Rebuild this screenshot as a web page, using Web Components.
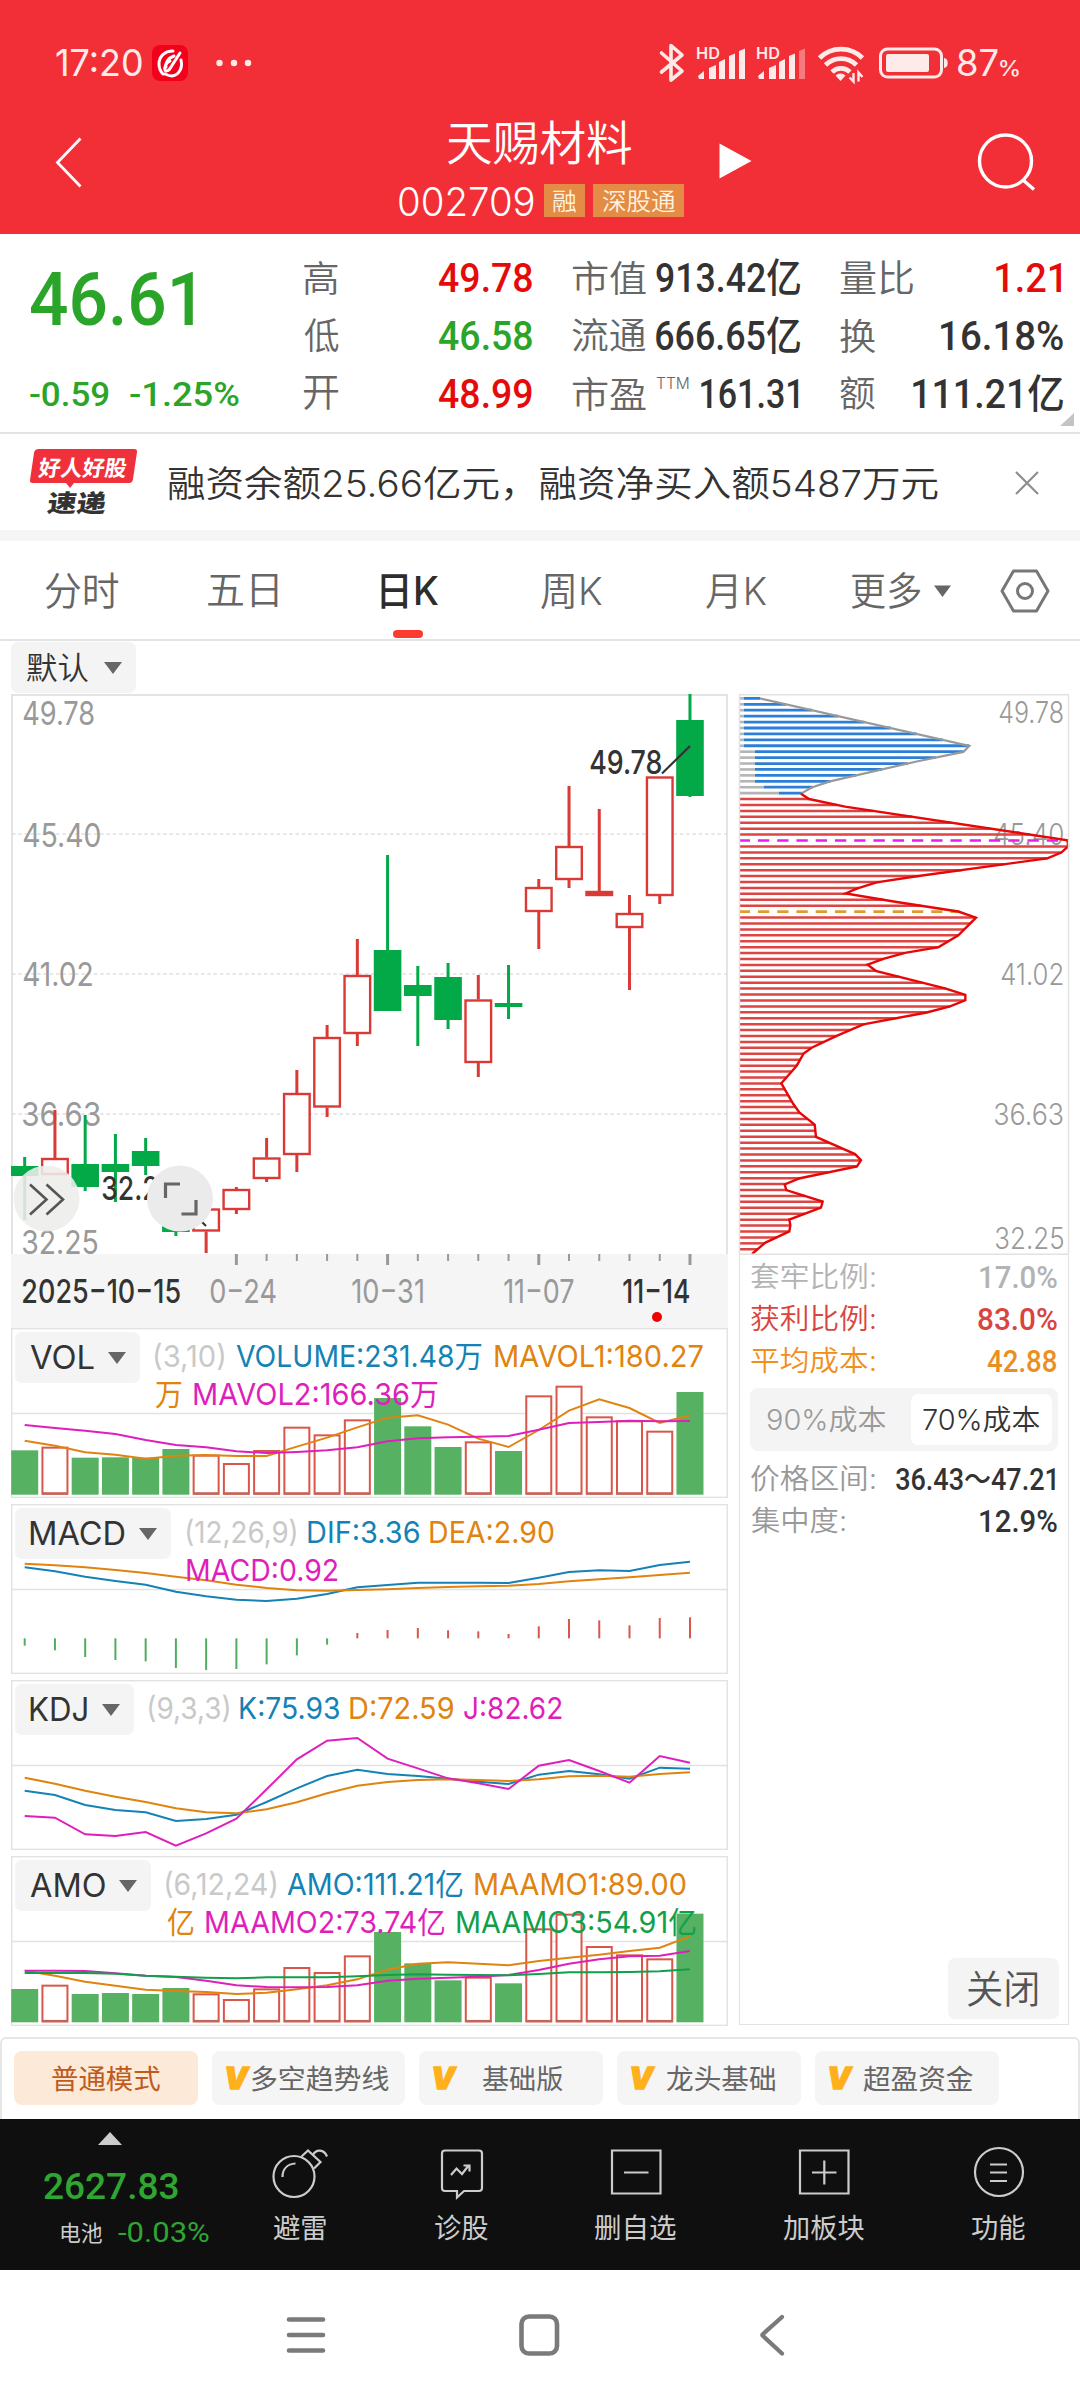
<!DOCTYPE html>
<html lang="zh-CN">
<head>
<meta charset="utf-8">
<title>天赐材料 002709</title>
<style>
  html, body { margin: 0; padding: 0; background: #fff; }
  body { width: 1080px; font-family: Inter, "Noto Sans CJK SC", sans-serif; }
</style>
</head>
<body>
<stock-page></stock-page>
<script>
const MISANS = 'Inter, "Noto Sans CJK SC", sans-serif';
const BASE = `
  :host { display: block; box-sizing: border-box; font-family: ${MISANS}; }
  * { box-sizing: border-box; }
  .row { display: flex; }
  .num { font-family: Roboto, "Noto Sans CJK SC", sans-serif; font-weight: 500; }
  svg { display: block; flex: none; overflow: visible; }
`;

function define(name, css, html) {
  customElements.define(name, class extends HTMLElement {
    constructor() {
      super();
      const root = this.attachShadow({ mode: 'open' });
      const t = document.createElement('template');
      t.innerHTML = `<style>${BASE}${css}</style>` + (typeof html === 'string' ? html : '');
      root.appendChild(t.content.cloneNode(true));
    }
    connectedCallback() {
      if (typeof html === 'function' && !this.ready) {
        this.ready = true;
        this.shadowRoot.innerHTML = `<style>${BASE}${css}</style>` + html(this);
      }
    }
  });
}

/* A text run whose visible ink fills a box of w x h. With s, the font size is
   fixed and the baseline sits on the bottom edge of the box. */
const pen = document.createElement('canvas').getContext('2d');
customElements.define('ink-text', class extends HTMLElement {
  constructor() {
    super();
    this.attachShadow({ mode: 'open' }).innerHTML = `<style>
      :host { display: block; flex: none; white-space: nowrap; }
      #t { display: block; width: max-content; line-height: 1; transform-origin: 0 0; }
      i { display: inline-block; width: 0; height: 0; }
    </style><span id="t"><slot></slot><i></i></span>`;
  }
  connectedCallback() {
    const w = +this.getAttribute('w'), h = +this.getAttribute('h');
    let s = +this.getAttribute('s') || 0;
    const fixed = !!s, text = this.textContent;
    const cs = getComputedStyle(this);
    const measure = px => {
      pen.font = `${cs.fontStyle} ${cs.fontWeight} ${px}px ${cs.fontFamily}`;
      return pen.measureText(text);
    };
    if (!s) {
      const m = measure(100);
      s = h / (m.actualBoundingBoxAscent + m.actualBoundingBoxDescent) * 100;
    }
    const m = measure(s);
    this.style.width = w + 'px';
    this.style.height = h + 'px';
    const t = this.shadowRoot.getElementById('t');
    t.style.fontSize = s + 'px';
    const base = t.querySelector('i').getBoundingClientRect().bottom - t.getBoundingClientRect().top;
    const kx = w / (m.actualBoundingBoxLeft + m.actualBoundingBoxRight);
    const dy = fixed ? h - base : m.actualBoundingBoxAscent - base;
    t.style.transform = `translate(${m.actualBoundingBoxLeft * kx}px, ${dy}px) scaleX(${kx})`;
  }
});

define('status-bar', `
  :host { height: 100px; color: #ffeaea; padding: 43px 0 0 56px; }
  .row { height: 40px; }
`, `
  <div class="row">
    <ink-text w="86" h="28" style="margin-top:6px">17:20</ink-text>
    <svg width="110" height="40" viewBox="142 43 110 40">
      <rect x="152" y="45" width="36" height="36" rx="8" fill="#f4001c"/>
      <path d="M173 51c-9 0-14 6-14 13 0 5 2 8 4 10M180 53l-9 14c-2 4-5 5-6 3-1-3 1-7 5-9M181 60c2 8-2 15-9 16-3 0-5-1-7-2M174 56c-6 2-9 7-8 11" fill="none" stroke="#fff" stroke-width="3" stroke-linecap="round"/>
      <g fill="#ffeaea"><circle cx="219.500" cy="63" r="3.200"/><circle cx="234" cy="63" r="3.200"/><circle cx="248" cy="63" r="3.200"/></g>
    </svg>
    <svg width="34" height="40" viewBox="656 43 34 40" style="margin-left:404px">
      <path d="M661.500 53l20.500 18-11 9V45.500l11 9.500-20.500 17" fill="none" stroke="#ffeaea" stroke-width="3.600" stroke-linejoin="round" stroke-linecap="round"/>
    </svg>
    <signal-bars></signal-bars>
    <signal-bars weak style="margin-left:8px"></signal-bars>
    <svg width="54" height="40" viewBox="814 43 54 40" style="margin-left:5px">
      <g fill="none" stroke="#ffeaea" stroke-width="4.800">
        <path d="M820.500 58a30.500 30.500 0 0 1 43 0"/><path d="M826.500 65a22 22 0 0 1 31 0"/><path d="M833 72a13 13 0 0 1 18 0"/>
      </g>
      <path d="M836.500 75.500a7.500 7.500 0 0 1 10 0l-5 5.500z" fill="#ffeaea"/>
      <path d="M854.500 73v8.500l-4-4M859.500 81.500v-9l4 4.500" fill="none" stroke="#ffeaea" stroke-width="2.400"/>
    </svg>
    <svg width="72" height="40" viewBox="880 43 72 40" style="margin-left:12px">
      <rect x="881.500" y="49" width="61" height="28" rx="7" fill="none" stroke="#ffeaea" stroke-width="3"/>
      <rect x="887" y="54" width="43" height="18" rx="2" fill="#ffeaea"/>
      <path d="M945 58c5 0 5 10 0 10z" fill="#ffeaea"/>
    </svg>
    <ink-text w="40" h="28" style="margin:6px 0 0 7px">87</ink-text>
    <ink-text w="19" h="16" style="margin:17px 0 0 2px;font-weight:500">%</ink-text>
  </div>
`);

define('signal-bars', `
  :host { width: 52px; height: 40px; margin-left: 6px; display: flex; }
  ink-text { margin: 4px -24px 0 1px; font-weight: 600; }
`, el => `
  <ink-text w="23" h="12">HD</ink-text>
  <svg width="52" height="40" viewBox="-1 43 52 40" fill="#ffeaea">
    <path d="M1 76l6-5v8H2z"/><path d="M12 68l7-3v14h-7z"/><path d="M22 62l6-3v20h-6z"/><path d="M32 56l6-2.500V79h-6z"/>
    <path d="M42 51l6-2.500V79h-6z" opacity="${el.hasAttribute('weak') ? .4 : 1}"/>
  </svg>
`);

define('title-bar', `
  :host { height: 134px; display: flex; color: #fff; }
  .mid { width: 285px; margin-left: 317px; }
  ink-text { font-weight: 350; }
  .code { margin-top: 20px; align-items: center; height: 33px; }
  .tag { background: #e48b45; color: #fff3df; height: 33px; padding: 5px 5px 0; }
`, `
  <svg width="26" height="134" viewBox="56 100 26 134" style="margin-left:56px"><path d="M80.500 138.500L57.500 162.500l23 24" fill="none" stroke="#fff" stroke-width="2.800"/></svg>
  <div class="mid">
    <ink-text w="184" h="44" style="margin:20px 0 0 49px">天赐材料</ink-text>
    <div class="row code">
      <ink-text w="135" h="30">002709</ink-text>
      <div class="tag" style="width:41px;margin-left:10px;padding-left:9px"><ink-text w="23" h="22">融</ink-text></div>
      <div class="tag" style="width:91px;margin-left:8px;padding-left:9px"><ink-text w="73" h="22">深股通</ink-text></div>
    </div>
  </div>
  <svg width="33" height="134" viewBox="719 100 33 134" style="margin-left:35px"><path d="M719.500 143.500v35L751.500 161z" fill="#fff"/></svg>
  <svg width="64" height="134" viewBox="975 100 64 134" style="margin-left:223px"><g fill="none" stroke="#fff" stroke-width="3.400"><circle cx="1005.500" cy="161" r="26"/><path d="M1023 180l11 9.500"/></g></svg>
`);

define('quote-cell', `
  :host { display: flex; justify-content: space-between; align-items: flex-end; height: 35px; }
  .l { color: #666; font-weight: 350; }
`, el => {
  const a = n => el.getAttribute(n);
  return `<ink-text class="l" w="${a('lw')}" h="34">${a('label')}</ink-text>
  ${a('sup') ? `<ink-text class="l" w="33" h="12" style="margin:0 12px 21px 9px">${a('sup')}</ink-text>` : ''}
  <ink-text class="num" w="${a('vw')}" h="29" s="40" style="color:${a('c') || '#333'}; margin:0 ${a('pr') || 0}px 2px 0">${a('value')}</ink-text>`;
});

define('quote-board', `
  :host { height: 200px; border-bottom: 2px solid #e3e3e3; padding: 25px 17px 0 30px; display: flex; align-items: flex-start; }
  .col { display: flex; flex-direction: column; gap: 23px; width: 228px; }
  .price { width: 209px; margin-right: 65px; color: #2ba42a; padding-top: 13px; }
`, `
  <div class="price">
    <ink-text class="num" w="163" h="54">46.61</ink-text>
    <div class="row" style="margin-top:56px"><ink-text class="num" w="79" h="25">-0.59</ink-text>
    <ink-text class="num" w="109" h="25" style="margin-left:21px">-1.25%</ink-text></div>
  </div>
  <div class="col">
    <quote-cell label="高" lw="34" value="49.78" vw="93" c="#e60b0b"></quote-cell>
    <quote-cell label="低" lw="35" value="46.58" vw="93" c="#2ba42a"></quote-cell>
    <quote-cell label="开" lw="35" value="48.99" vw="93" c="#e60b0b"></quote-cell>
  </div>
  <div class="col" style="margin-left:40px">
    <quote-cell label="市值" lw="74" value="913.42亿" vw="144"></quote-cell>
    <quote-cell label="流通" lw="74" value="666.65亿" vw="144"></quote-cell>
    <quote-cell label="市盈" lw="74" sup="TTM" value="161.31" vw="97" pr="2"></quote-cell>
  </div>
  <div class="col" style="margin-left:40px;width:223px">
    <quote-cell label="量比" lw="73" value="1.21" vw="65" pr="2" c="#e60b0b"></quote-cell>
    <quote-cell label="换" lw="35" value="16.18%" vw="122"></quote-cell>
    <quote-cell label="额" lw="35" value="111.21亿" vw="150"></quote-cell>
  </div>
  <svg width="14" height="14" viewBox="0 0 14 14" style="margin:154px -11px 0 -3px"><path d="M14 0v13H0z" fill="#c4c4c4"/></svg>
`);

define('news-strip', `
  :host { height: 107px; display: flex; border-bottom: 11px solid #f5f5f5; }
  .logo { width: 107px; margin-left: 30px; padding-top: 15px; height: 96px; display: grid; align-content: start; }
  .logo > * { grid-column: 1; }
  .logo svg { grid-row: 1; }
  .a { grid-row: 1; margin: 8px 0 0 9px; color: #fff; font-weight: 700; transform: skewX(-8deg); }
  .b { margin: 1px 0 0 18px; color: #333; font-weight: 900; transform: skewX(-8deg); }
`, `
  <div class="logo">
    <svg width="107" height="40" viewBox="30 449 107 40"><path d="M39 449h95q3.500 0 3 3l-4 27q-.5 4-4 4h-55l-4 5-4-5H33q-3.500 0-3-3l4-27q.5-4 5-4z" fill="#f0303a"/></svg>
    <ink-text class="a" w="88" h="21">好人好股</ink-text>
    <ink-text class="b" w="58" h="24">速递</ink-text>
  </div>
  <ink-text w="771" h="35" style="margin:31px 0 0 31px;color:#333;font-weight:350">融资余额25.66亿元，融资净买入额5487万元</ink-text>
  <svg width="26" height="26" viewBox="0 0 26 26" style="margin:36px 0 0 75px"><path d="M2 2l22 22M24 2L2 24" stroke="#8d8d8d" stroke-width="2.200" fill="none"/></svg>
`);

define('period-tabs', `
  :host { height: 100px; display: flex; border-bottom: 2px solid #e3e3e3; color: #666; padding-top: 31px; font-weight: 350; }
  .on { color: #2d2d2d; font-weight: 500; }
  .bar { width: 30px; height: 8px; border-radius: 4px; background: #fb3b30; margin: 22px 0 0 12px; }
`, `
  <ink-text w="74" h="36" style="margin-left:45px">分时</ink-text>
  <ink-text w="70" h="33" style="margin:2px 0 0 89px">五日</ink-text>
  <div style="margin-left:103px" class="on"><ink-text w="57" h="34" style="margin-top:2px">日K</ink-text><div class="bar"></div></div>
  <ink-text w="61" h="34" style="margin:2px 0 0 103px">周K</ink-text>
  <ink-text w="60" h="34" style="margin:2px 0 0 104px">月K</ink-text>
  <ink-text w="70" h="36" style="margin-left:85px">更多</ink-text>
  <svg width="17" height="12" viewBox="0 0 17 12" style="margin:13px 0 0 13px"><path d="M0 .5h17L8.500 12z" fill="#666"/></svg>
  <svg width="52" height="46" viewBox="0 0 52 46" style="margin:-4px 0 0 48px"><g fill="none" stroke="#777" stroke-width="3"><path d="M14.500 3h23L49 23 37.500 43h-23L3 23z" stroke-linejoin="round"/><circle cx="26" cy="23" r="7.500"/></g></svg>
`);

define('pick-box', `
  :host { display: flex; background: #f4f4f4; border-radius: 7px; height: 51px; color: #333; }
`, el => {
  const cjk = el.getAttribute('th') > 26;
  return `<ink-text w="${el.getAttribute('tw')}" h="${el.getAttribute('th')}" style="margin:${cjk ? 10 : 13}px 0 0 15px;font-weight:${cjk ? 350 : 400}">${el.getAttribute('text')}</ink-text>
  <svg width="18" height="12" viewBox="0 0 18 12" style="margin:20px 14px 0 auto"><path d="M0 0h18L9 12z" fill="#666"/></svg>`;
});

const RED = '#d93a35', GREEN = '#03a847', UP = '#d9574a', DOWN = '#57b163';
const cx = i => 24.7 + 30.24 * i;
/* Chart label whose ink runs from x0 to x1 on baseline y. */
function label(x0, x1, y, text, fill = '#999', weight = 400, size = 33) {
  pen.font = `${weight} ${size}px ${MISANS}`;
  const m = pen.measureText(text);
  const k = (x1 - x0) / (m.actualBoundingBoxLeft + m.actualBoundingBoxRight);
  return `<text transform="translate(${x0 + m.actualBoundingBoxLeft * k} ${y}) scale(${k} 1)" font-size="${size}" font-weight="${weight}" fill="${fill}">${text}</text>`;
}

/* direction, high, body top, body bottom, low */
const CANDLES = [
  ['g',1157,1166,1176,1220],['r',1110,1158,1175,1175],['g',1115,1164,1187,1191],['g',1134,1164,1172,1202],
  ['g',1138,1151,1166,1175],['g',1215,1215,1232,1236],['r',1208.5,1208.5,1231.500,1253],['r',1187,1189,1210,1214],
  ['r',1138,1157.5,1179,1182],['r',1070,1093,1155,1172],['r',1025,1037,1107.5,1117],['r',939,975,1034,1046],
  ['g',855,950,1011,1011],['g',966,985,996,1046],['g',963,977,1020,1029],['r',975,999.5,1063,1077],
  ['g',965,1003,1007,1019],['r',879,887,912,949],['r',786,846,880,888],['r',809,891,896,896],
  ['r',895,913,928,990],['r',776.5,776.5,896,904],['g',694,720,796,797]
];

define('kline-chart', `:host { width: 717px; height: 634px; }`, () => {
  let s = '';
  for (const y of [834, 974, 1114]) s += `<path d="M12 ${y}H727" stroke="#e0e0e0" stroke-width="1.500" stroke-dasharray="3.500 2.800"/>`;
  s += label(23, 94, 725, '49.78') + label(23, 100, 847, '45.40') + label(23, 92, 986, '41.02')
     + label(23, 100, 1126, '36.63') + label(23, 98, 1253.500, '32.25');
  CANDLES.forEach(([d, hi, t, b, lo], i) => {
    const x = cx(i), c = d === 'g' ? GREEN : RED;
    s += `<path d="M${x} ${hi}V${t}M${x} ${b}V${lo}" stroke="${c}" stroke-width="3"/>`;
    s += d === 'g'
      ? `<rect x="${Math.max(11, x - 13.800)}" y="${t}" width="${x - 13.800 < 11 ? 27.600 - (11 - x + 13.800) : 27.600}" height="${b - t}" fill="${c}"/>`
      : `<rect x="${x - 12.800}" y="${t + 1}" width="25.600" height="${Math.max(1.500, b - t - 2)}" fill="${b - t < 8 ? c : '#fff'}" stroke="${c}" stroke-width="2.400"/>`;
  });
  s += label(590, 661, 774, '49.78', '#333', 500) + '<path d="M662 773.500L690 746" stroke="#333" stroke-width="2.200"/>';
  s += label(102, 174, 1199.500, '32.25', '#333', 500) + '<path d="M188 1208L206 1226" stroke="#333" stroke-width="2.200"/>';
  s += `<g><circle cx="46.500" cy="1198.500" r="33" fill="#ededeb" opacity=".88"/><path d="M30 1184.500l16.500 15-16.500 15M46.500 1184.500l16.500 15-16.500 15" fill="none" stroke="#555" stroke-width="2.600"/></g>`;
  s += `<g><circle cx="180" cy="1198.500" r="33" fill="#ebebeb"/><path d="M165.500 1198v-14H180M196 1200v14h-14.500" fill="none" stroke="#666" stroke-width="3.200"/></g>`;
  s += '<rect x="11" y="1254" width="717" height="74" fill="#f5f5f5"/>';
  for (let i = 7; i < 23; i++) {
    const m = (i - 7) % 5 === 0;
    s += `<path d="M${cx(i)} 1254V${m ? 1265 : 1261}" stroke="#999" stroke-width="${m ? 3 : 2}"/>`;
  }
  s += label(210, 276, 1303, '0−24') + label(352, 423, 1303, '10−31') + label(504, 574, 1303, '11−07')
     + label(23, 180, 1303, '2025−10−15', '#333', 500) + label(623, 689, 1303, '11−14', '#333', 500);
  s += '<circle cx="657" cy="1317" r="5" fill="#f00000"/>';
  return `<svg width="717" height="634" viewBox="11 694 717 634" font-family='${MISANS}'>
    <path d="M12 1254V695H727V1254" fill="none" stroke="#e4e4e4" stroke-width="2"/>${s}</svg>`;
});

const line = (v, dy, c) => `<polyline fill="none" stroke="${c}" stroke-width="2" points="${v.map((y, i) => `${cx(i)},${y / 3 + dy}`).join(' ')}"/>`;
const bars = (v, dirs, dy, bottom) => v.map((y, i) => {
  const x = cx(i), t = y / 3 + dy;
  if (dirs[i] === 'g') return `<rect x="${x - 13.500}" y="${t}" width="27" height="${bottom - t}" fill="${DOWN}"/>`;
  return `<rect x="${x - 12.500}" y="${t + 1}" width="25" height="${bottom - t - 2}" fill="#fff" stroke="${UP}" stroke-width="2"/><path d="M${x - 13} ${bottom - 1.200}h26" stroke="#c0665b" stroke-width="2.400"/>`;
}).join('');
const DIRS = CANDLES.map(c => c[0]);
const C = { k: '#1482b5', o: '#e0830f', m: '#df1fbb', g: '#11a04a', p: '#c9c9c9' };

const PANELS = {
  VOL: { y: 1328, box: 125, tw: 64, draw: () =>
      bars([391,380,413,412,413,387,404,429,390,320,343,298,234,319,381,364,393,226,197,289,301,332,216], DIRS, 1320, 1494.7)
      + line([362,377,397,404,416,407,405,408,408,380,353,322,293,286,314,356,381,330,272,238,264,309,286], 1320, C.o)
      + line([315,324,332,342,360,375,382,394,399,396,391,382,364,355,352,350,348,329,309,306,302,304,303], 1320, C.m),
    legend: [[['(3,10)',69,C.p,15],['VOLUME:231.48万',246,C.k,12],['MAVOL1:180.27',208,C.o,13]],
             [['万',26,C.o,16],['MAVOL2:166.36万',244,C.m,12]]] },
  MACD: { y: 1504, box: 156, tw: 95, draw: () => {
      const e = [977,991,1011,1020,1024,1044,1050,1047,1033,1006,974,939,930,924,931,934,942,919,897,901,916,894,892];
      return e.map((v, i) => `<path d="M${cx(i)} ${955 / 3 + 1320}V${v / 3 + 1320}" stroke="${v > 955 ? '#4fae5d' : '#d9574a'}" stroke-width="2"/>`).join('')
      + line([742,754,770,783,794,815,829,839,843,836,822,802,795,788,788,788,789,773,756,751,753,735,725], 1320, C.k)
      + line([731,736,742,750,759,770,781,794,804,811,812,810,808,804,801,799,797,792,784,778,772,765,758], 1320, C.o); },
    legend: [[['(12,26,9)',109,C.p,16],['DIF:3.36',111,C.k,12],['DEA:2.90',124,C.o,11]],
             [['MACD:0.92',151,C.m,16]]] },
  KDJ: { y: 1680, box: 119, tw: 57, draw: () =>
      line([362,375,405,420,427,453,447,434,396,355,318,299,312,318,326,335,342,314,303,313,326,293,296], 1670, C.k)
      + line([323,341,362,380,396,415,427,430,418,397,370,347,336,330,328,330,333,328,319,317,320,312,307], 1670, C.o)
      + line([438,443,493,498,486,527,490,446,358,268,212,204,266,295,325,340,357,287,270,303,338,258,278], 1670, C.m),
    legend: [[['(9,3,3)',80,C.p,15],['K:75.93',99,C.k,11],['D:72.59',103,C.o,11],['J:82.62',98,C.m,11]]] },
  AMO: { y: 1856, box: 136, tw: 75, draw: () =>
      bars([957,944,972,969,972,954,970,987,955,891,906,856,786,880,931,920,940,775,731,828,853,865,731], DIRS, 1670, 2022.300)
      + line([902,917,935,947,959,963,966,972,968,958,946,928,899,881,877,881,886,873,863,854,843,833,799], 1670, C.o)
      + line([902,902,903,910,917,921,932,946,951,952,951,946,932,926,923,920,915,900,881,868,859,857,843], 1670, C.m)
      + line([909,909,909,911,917,920,923,925,922,922,922,919,915,913,914,915,916,912,907,907,906,904,898], 1670, C.g),
    legend: [[['(6,12,24)',110,C.p,15],['AMO:111.21亿',176,C.k,11],['MAAMO1:89.00',211,C.o,12]],
             [['亿',27,C.o,16],['MAAMO2:73.74亿',239,C.m,12],['MAAMO3:54.91亿',239,C.g,12]]] }
};

define('indicator-panel', `
  :host { display: grid; width: 717px; height: 170px; }
  svg, .top { grid-area: 1 / 1; }
  .top { display: flex; padding: 4px; align-items: flex-start; }
  .legend { padding-top: 12.500px; display: flex; flex-direction: column; gap: 17.300px; }
`, el => {
  const name = el.getAttribute('name'), p = PANELS[name];
  return `<svg width="717" height="170" viewBox="11 ${p.y} 717 170">
      <rect x="11.700" y="${p.y + .7}" width="715.600" height="168.600" fill="none" stroke="#e2e2e2" stroke-width="1.400"/>
      <path d="M12 ${p.y + 85.500}H727" stroke="#e2e2e2" stroke-width="1.400"/>${p.draw()}</svg>
    <div class="top"><pick-box text="${name}" tw="${p.tw}" th="24" style="width:${p.box}px"></pick-box>
      <div class="legend">${p.legend.map(r => `<div class="row">${r.map(([t, w, c, g]) =>
        `<ink-text w="${w}" h="21.700" s="30" style="color:${c};margin-left:${g}px">${t}</ink-text>`).join('')}</div>`).join('')}</div></div>`;
});

const PEAKS_GRAY = [[90,48],[718,172],[700,188],[560,213],[300,265],[245,281],[213,297]];
const PEAKS_RED = [[213,297],[237,311],[345,331],[1013,419],[1014,435],[994,451],[952,466],[560,513],[440,529],[380,545],[347,558],[500,580],[685,605],[738,621],[685,667],[626,698],[525,713],[460,729],[413,744],[437,760],[645,806],[706,823],[706,837],[660,853],[590,869],[400,900],[320,930],[245,961],[221,976],[200,1008],[154,1054],[190,1108],[208,1130],[254,1162],[258,1194],[375,1239],[393,1255],[381,1271],[210,1302],[164,1318],[169,1333],[278,1363],[273,1379],[178,1410],[181,1425],[178,1441],[105,1471],[66,1500]];
const px = x => x / 3 + 730, py = y => y / 2.6133 + 680;
function widthAt(y) {
  const all = PEAKS_GRAY.concat(PEAKS_RED);
  for (let i = 1; i < all.length; i++) {
    const [x0, y0] = all[i - 1], [x1, y1] = all[i];
    if (y >= y0 && y <= y1 && y1 > y0) return x0 + (x1 - x0) * (y - y0) / (y1 - y0);
  }
  return 90;
}

define('cost-chart', `:host { width: 330px; height: 561px; }`, () => {
  let s = label(999, 1063, 722.500, '49.78', '#999', 350, 30) + label(994, 1063, 845, '45.40', '#999', 350, 30)
    + label(1001, 1063, 985, '41.02', '#999', 350, 30) + label(995, 1063, 1125, '36.63', '#999', 350, 30) + label(996, 1063, 1249, '32.25', '#999', 350, 30);
  for (let k = 0; k < 94; k++) {
    const r = 48 + 15.480 * k, y = py(r), x = px(widthAt(r));
    if (k < 17) {
      const g = px(k < 9 ? 42 : k < 15 ? 75 : k < 16 ? 101 : 147);
      s += `<path d="M740 ${y}H${g}" stroke="#b5b5b5" stroke-width="2.600"/><path d="M${g} ${y}H${x}" stroke="#2c7fd6" stroke-width="2.800"/>`;
    } else if (k === 24) {
      s += `<path d="M740 ${y}H${x}" stroke="#e81fe8" stroke-width="2.600" stroke-dasharray="11.300 7.950" stroke-dashoffset="1.300"/>`;
    } else if (k === 36) {
      s += `<path d="M740 ${y}H${x}" stroke="#e29a2e" stroke-width="2.800" stroke-dasharray="11.300 7.950" stroke-dashoffset="1.300"/>`;
    } else s += `<path d="M740 ${y}H${x}" stroke="#dd4545" stroke-width="2.500"/>`;
  }
  const pts = a => a.map(([x, y]) => `${px(x)},${py(y)}`).join(' ');
  s += `<polyline points="${pts(PEAKS_GRAY)}" fill="none" stroke="#999" stroke-width="2.200"/><polyline points="${pts(PEAKS_RED)}" fill="none" stroke="#e60808" stroke-width="2.400"/>`;
  return `<svg width="330" height="561" viewBox="739 694 330 561" font-family='${MISANS}'>${s}<path d="M739.500 1255V694.700H1068.500V1255M739 1254.300H1069" fill="none" stroke="#e2e2e2" stroke-width="1.400"/></svg>`;
});

define('cost-row', `:host { display: flex; justify-content: space-between; align-items: flex-start; height: 42px; }
  .l { font-weight: 350; }`, el => {
  const a = n => el.getAttribute(n);
  return `<ink-text class="l" w="${a('lw')}" h="27" style="color:${a('lc')}">${a('label')}</ink-text>
    <ink-text class="num" w="${a('vw')}" h="22" s="31" style="margin-top:4px;color:${a('vc')}">${a('value')}</ink-text>`;
});

define('cost-panel', `
  :host { width: 330px; height: 1331px; display: flex; flex-direction: column; }
  .info { flex: 1; border: 1.400px solid #e2e2e2; border-top: 0; padding: 7px 9px 5px 11px; display: flex; flex-direction: column; }
  .rows { padding-right: 2px; }
  .switch { height: 63px; width: 308px; margin: 0 0 13px -1px; border-radius: 8px; background: #f4f4f4; display: flex; padding: 6px; font-weight: 350; }
  .off { width: 155px; color: #999; padding: 11px 0 0 11px; }
  .on { width: 141px; border-radius: 7px; background: #fff; color: #333; padding: 11px 0 0 12px; }
  .close { margin: auto 0 0 auto; width: 111px; height: 61px; border-radius: 7px; background: #f4f4f4; color: #555; padding: 12px 0 0 20px; font-weight: 350; }
`, `
  <cost-chart></cost-chart>
  <div class="info">
    <div class="rows">
      <cost-row label="套牢比例:" lw="124" lc="#b3b3b3" value="17.0%" vw="77" vc="#b3b3b3"></cost-row>
      <cost-row label="获利比例:" lw="124" lc="#d9443f" value="83.0%" vw="79" vc="#d9443f"></cost-row>
      <cost-row label="平均成本:" lw="124" lc="#f08f1b" value="42.88" vw="70" vc="#ea9023"></cost-row>
    </div>
    <div class="switch">
      <div class="off"><ink-text w="119" h="27">90%成本</ink-text></div>
      <div class="on"><ink-text w="117" h="27">70%成本</ink-text></div>
    </div>
    <div class="rows">
      <cost-row label="价格区间:" lw="124" lc="#999" value="36.43～47.21" vw="159" vc="#333" style="padding-right:2px"></cost-row>
      <cost-row label="集中度:" lw="94" lc="#999" value="12.9%" vw="77" vc="#333"></cost-row>
    </div>
    <div class="close"><ink-text w="70" h="36">关闭</ink-text></div>
  </div>
`);

define('chart-area', `
  :host { display: flex; gap: 11px; padding: 0 11px; height: 1343px; align-items: flex-start; }
  .left { display: flex; flex-direction: column; width: 717px; }
  indicator-panel { margin-bottom: 6px; }
`, `
  <div class="left">
    <kline-chart></kline-chart>
    <indicator-panel name="VOL"></indicator-panel>
    <indicator-panel name="MACD"></indicator-panel>
    <indicator-panel name="KDJ"></indicator-panel>
    <indicator-panel name="AMO"></indicator-panel>
  </div>
  <cost-panel></cost-panel>
`);

define('mode-chip', `
  :host { display: flex; height: 54px; width: 184px; border-radius: 8px; background: #f5f5f5; color: #666; padding-top: 14px; flex: none; }
  :host([on]) { background: #fce9d7; color: #bf5b20; padding-left: 38px; }
  .v { color: #ffb01a; font-weight: 900; font-style: italic; margin: 2px 0 0 14px; -webkit-text-stroke: 1.500px #ffb01a; }
`, el => (el.hasAttribute('on') ? '' : '<ink-text class="v" w="24" h="22">V</ink-text>')
  + `<ink-text w="${el.getAttribute('tw')}" h="26" style="margin-left:${el.getAttribute('gap')}px">${el.getAttribute('text')}</ink-text>`);

define('mode-bar', `
  :host { height: 82px; border: 2px solid #e6e6e6; border-bottom: 0; border-radius: 6px 6px 0 0; display: flex; gap: 14px; padding: 12px 0 0 12px; }
`, `
  <mode-chip on text="普通模式" tw="108" gap="0"></mode-chip>
  <mode-chip text="多空趋势线" tw="137" gap="2" style="width:193px"></mode-chip>
  <mode-chip text="基础版" tw="81" gap="25"></mode-chip>
  <mode-chip text="龙头基础" tw="109" gap="11"></mode-chip>
  <mode-chip text="超盈资金" tw="110" gap="10"></mode-chip>
`);

define('dock-item', `
  :host { display: flex; flex-direction: column; align-items: center; color: #ccc; padding-top: 27px; flex: none; }
  ink-text { margin-top: 14px; }
`, el => {
  el.style.width = el.getAttribute('tw') + 'px';
  return `<slot></slot><ink-text w="${el.getAttribute('tw')}" h="26">${el.getAttribute('text')}</ink-text>`;
});

define('bottom-dock', `
  :host { height: 151px; background: #0f0f0f; display: flex; }
  .index { width: 165px; margin: 13px 64px 0 44px; color: #2fa632; }
  svg { fill: none; stroke: #ccc; stroke-width: 2.200; }
`, `
  <div class="index">
    <svg width="24" height="13" viewBox="0 0 24 13" style="margin-left:54px"><path d="M12 0l12 13H0z" fill="#ccc" stroke="none"/></svg>
    <ink-text class="num" w="134" h="28" style="margin-top:28px">2627.83</ink-text>
    <div class="row" style="margin-top:21px">
      <ink-text w="41" h="20" style="color:#ccc;margin-left:17px">电池</ink-text>
      <ink-text w="91" h="21" style="margin-left:16px;font-family:Roboto;font-weight:400">-0.03%</ink-text>
    </div>
  </div>
  <dock-item text="避雷" tw="53"><svg width="58" height="54" viewBox="271 2146 58 54">
    <circle cx="294" cy="2176.500" r="20.500"/><path d="M282.500 2177c0-8 5-13 13-13.500M301.500 2156.500l6.500-6 12.500 11.500-6.500 6.500M308 2150.500M313 2155c3-6 11-6 14 1.500"/></svg></dock-item>
  <dock-item text="诊股" tw="53" style="margin-left:109px"><svg width="50" height="54" viewBox="435 2146 50 54">
    <path d="M443 2150.500h34q3 0 3 3V2188q0 3-3 3h-15l-7 6.500v-6.500h-12q-3 0-3-3v-34.500q0-3 3-3zM449 2175l5.500-6.500 5.500 5.500 7-9M461.500 2165.500h6v6"/></svg></dock-item>
  <dock-item text="删自选" tw="81" style="margin-left:107px"><svg width="54" height="54" viewBox="609 2146 54 54">
    <path d="M612 2150.500h48.500v43H612zM624 2172.500h24.500"/></svg></dock-item>
  <dock-item text="加板块" tw="81" style="margin-left:107px"><svg width="54" height="54" viewBox="797 2146 54 54">
    <path d="M800 2150.500h48.500v43H800zM812 2172.500h24.500M824.300 2160.500v24"/></svg></dock-item>
  <dock-item text="功能" tw="53" style="margin-left:108px"><svg width="54" height="54" viewBox="972 2146 54 54">
    <circle cx="999" cy="2172" r="24"/><path d="M990 2164.500h17M990 2172.500h17M990 2181h17"/></svg></dock-item>
`);

define('nav-bar', `
  :host { height: 130px; display: flex; padding: 44px 0 0 287px; }
  svg { fill: none; stroke: #7a7a7a; }
`, `
  <svg width="38" height="44" viewBox="0 0 38 44"><path d="M2 5.500h34M2 21h34M2 36.500h34" stroke-width="4.600" stroke-linecap="round"/></svg>
  <svg width="44" height="44" viewBox="0 0 44 44" style="margin-left:192px"><rect x="4.500" y="2.500" width="35.500" height="37" rx="7.500" stroke-width="4.600"/></svg>
  <svg width="28" height="44" viewBox="0 0 28 44" style="margin-left:198px"><path d="M23 3L4 20q-1.500 1 0 2L23 39.500" stroke-width="4.200" stroke-linecap="round"/></svg>
`);

define('stock-page', `
  :host { width: 1080px; height: 2400px; background: #fff; overflow: hidden; }
  header { background: #f22f37; height: 234px; }
  .preset { height: 53px; padding: 1px 0 0 11px; }
`, `
  <header><status-bar></status-bar><title-bar></title-bar></header>
  <quote-board></quote-board>
  <news-strip></news-strip>
  <period-tabs></period-tabs>
  <div class="preset"><pick-box text="默认" tw="62" th="29" style="width:125px"></pick-box></div>
  <chart-area></chart-area>
  <mode-bar></mode-bar>
  <bottom-dock></bottom-dock>
  <nav-bar></nav-bar>
`);
</script>
</body>
</html>
